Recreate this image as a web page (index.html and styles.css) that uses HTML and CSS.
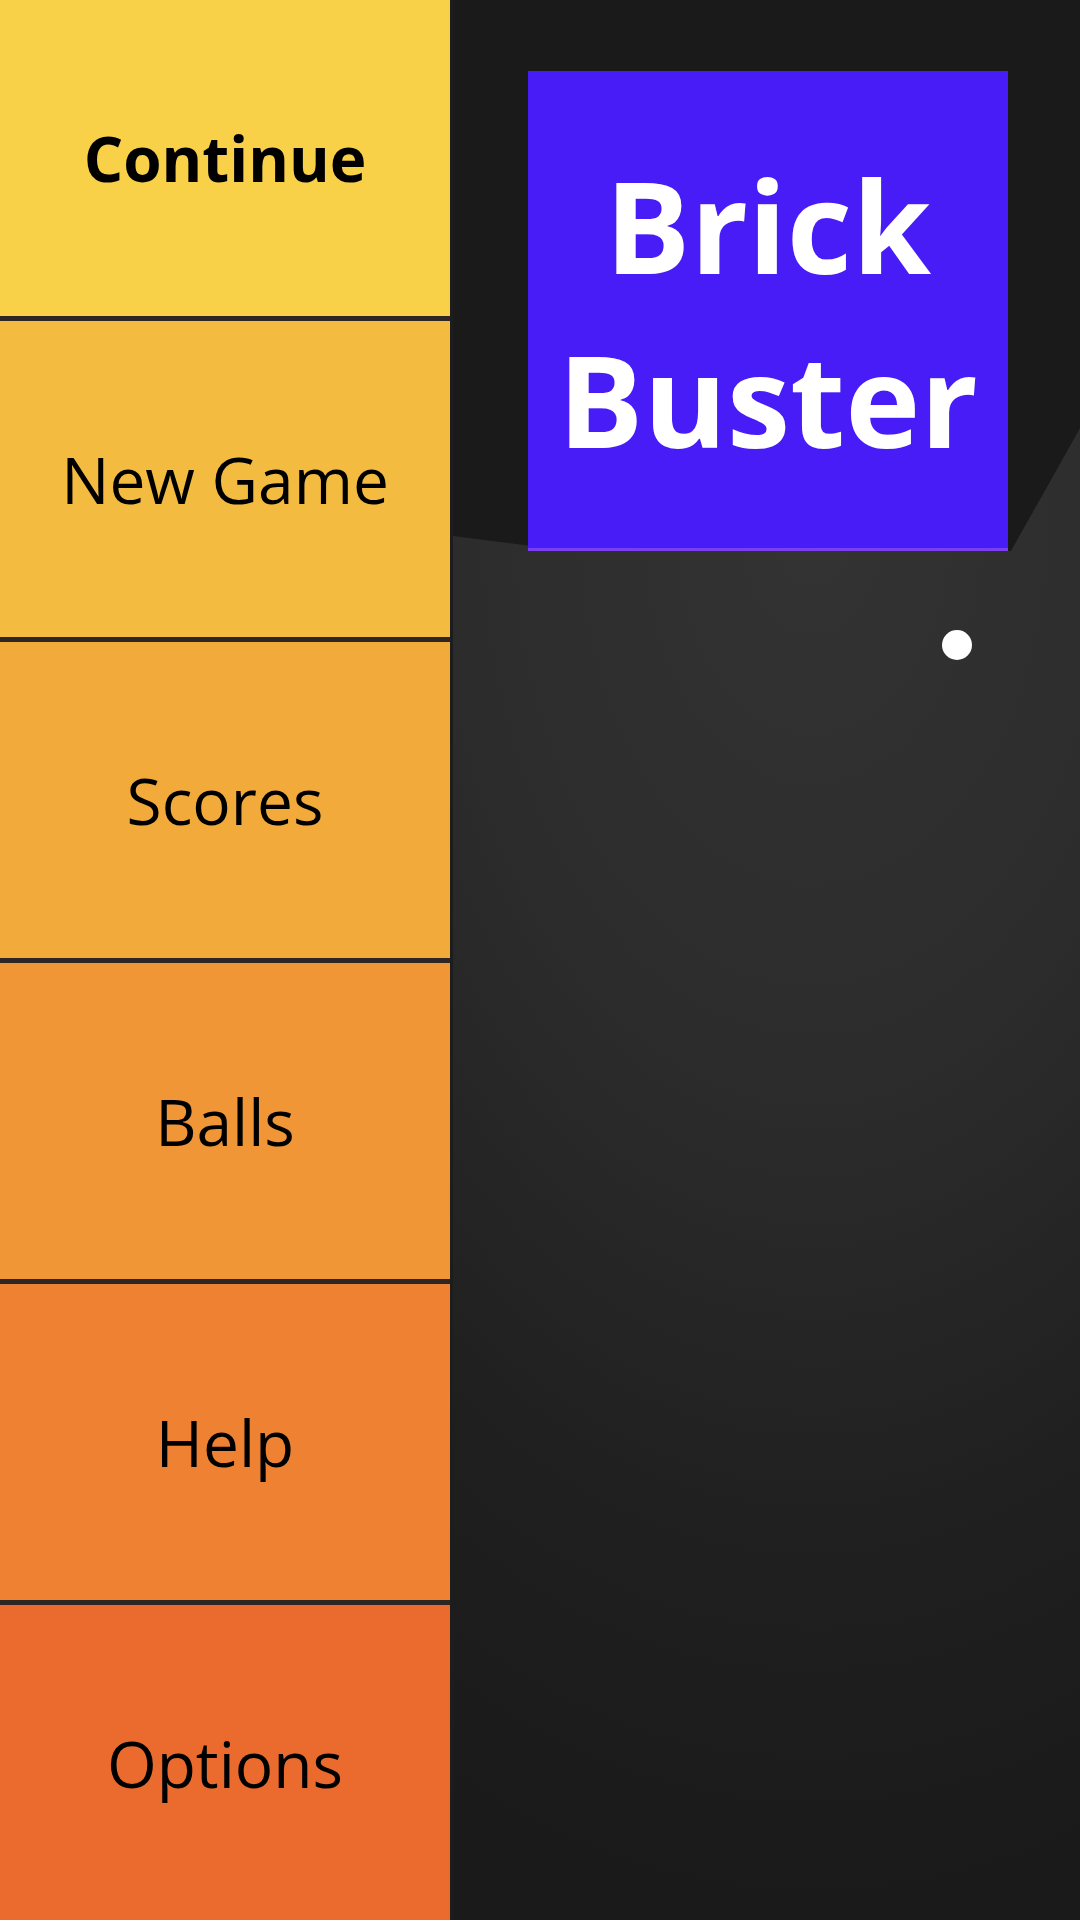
FILE: index.html
```html
<!DOCTYPE html>
<html>
<head>
<meta charset="utf-8">
<link rel="stylesheet" href="styles.css">
</head>
<body>
<div class="app">
  <nav class="menu">
    <div class="item c1 bold">Continue</div>
    <div class="item c2">New Game</div>
    <div class="item c3">Scores</div>
    <div class="item c4">Balls</div>
    <div class="item c5">Help</div>
    <div class="item c6">Options</div>
  </nav>
  <main class="stage">
    <div class="floor"></div>
    <div class="title">Brick<br>Buster</div>
    <div class="ball"></div>
  </main>
</div>
</body>
</html>
```
FILE: styles.css
```css
html, body {
  margin: 0;
  padding: 0;
  width: 1080px;
  height: 1920px;
  overflow: hidden;
  background: #1a1a1a;
}
.app {
  display: flex;
  width: 1080px;
  height: 1920px;
  font-family: "Open Sans", "Noto Sans", sans-serif;
}
.menu {
  width: 450px;
  flex: 0 0 450px;
  display: flex;
  flex-direction: column;
  gap: 5px;
  background: #2d2622;
  overflow: hidden;
}
.item {
  flex: 0 0 316px;
  height: 316px;
  display: flex;
  align-items: center;
  justify-content: center;
  font-size: 64px;
  color: #000;
}
.bold { font-weight: 700; font-size: 62px; }
.c1 { background: #f8d149; }
.c2 { background: #f3bb40; }
.c3 { background: #f2aa3b; }
.c4 { background: #f09636; }
.c5 { background: #ef8133; }
.c6 { background: #eb6a2e; }
.stage {
  position: relative;
  flex: 1;
  background: #1a1a1a;
  overflow: hidden;
  border-left: 3px solid #1d1d1d;
}
.floor {
  position: absolute;
  inset: 0;
  background: radial-gradient(ellipse 900px 1400px at 360px 520px, #333333 0%, #2c2c2c 40%, #1f1f1f 75%, #1a1a1a 100%);
  clip-path: polygon(0 536px, 78px 546px, 558px 551px, 630px 423px, 630px 1920px, 0 1920px);
}
.title {
  position: relative;
  margin: 71px 0 0 75px;
  width: 480px;
  height: 480px;
  background: #471cf7;
  box-shadow: inset 0 -3px 0 #7a3ff0;
  color: #fff;
  font-weight: 700;
  font-size: 127px;
  line-height: 174px;
  padding-top: 2px;
  box-sizing: border-box;
  display: flex;
  align-items: center;
  justify-content: center;
  text-align: center;
}
.ball {
  position: absolute;
  left: 489px;
  top: 630px;
  width: 30px;
  height: 30px;
  border-radius: 50%;
  background: #fff;
}
```
